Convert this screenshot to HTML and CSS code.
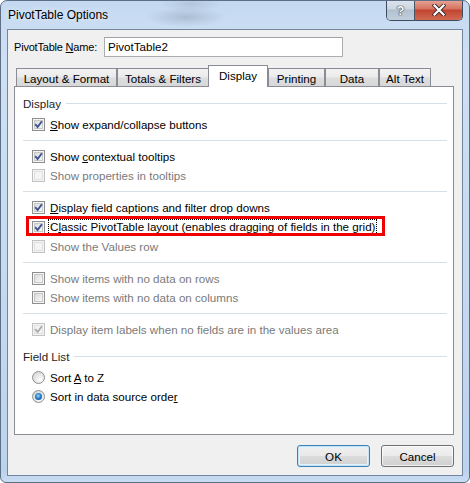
FILE: index.html
```html
<!DOCTYPE html>
<html lang="en">
<head>
  <meta charset="UTF-8">
  <title>PivotTable Options</title>
  <link rel="stylesheet" href="styles.css">
</head>
<body>
  <div class="window">
    <!-- Aero title bar -->
    <div class="titlebar">
      <span class="title">PivotTable Options</span>
      <div class="caption-btns">
        <span class="cbtn help">?</span>
        <span class="cbtn close">
          <svg width="14" height="12" viewBox="0 0 14 12">
            <path d="M2.5 1.5 L11.5 10.5 M11.5 1.5 L2.5 10.5" stroke="#3b2a2a" stroke-width="4" stroke-linecap="square"/>
            <path d="M2.5 1.5 L11.5 10.5 M11.5 1.5 L2.5 10.5" stroke="#fff" stroke-width="2.2" stroke-linecap="square"/>
          </svg>
        </span>
      </div>
    </div>

    <div class="client">
      <div class="name-row">
        <span class="name-label">PivotTable <u>N</u>ame:</span>
        <div class="textbox">PivotTable2</div>
      </div>

      <div class="tabs">
        <span class="tab w-layout">Layout &amp; Format</span>
        <span class="tab w-totals">Totals &amp; Filters</span>
        <span class="tab active w-display">Display</span>
        <span class="tab w-printing">Printing</span>
        <span class="tab w-data">Data</span>
        <span class="tab w-alt">Alt Text</span>
      </div>

      <div class="panel">
        <div class="group-head"><span>Display</span><span class="head-line"></span></div>

        <div class="row first">
          <span class="check on"><svg viewBox="0 0 11 11"><path d="M2.2 5.2 L4.6 8 L8.9 2.2"/></svg></span>
          <span class="label"><u>S</u>how expand/collapse buttons</span>
        </div>
        <div class="sep"></div>

        <div class="row">
          <span class="check on"><svg viewBox="0 0 11 11"><path d="M2.2 5.2 L4.6 8 L8.9 2.2"/></svg></span>
          <span class="label">Show <u>c</u>ontextual tooltips</span>
        </div>
        <div class="row">
          <span class="check disabled"></span>
          <span class="label dim">Show properties in tooltips</span>
        </div>
        <div class="sep"></div>

        <div class="row">
          <span class="check on"><svg viewBox="0 0 11 11"><path d="M2.2 5.2 L4.6 8 L8.9 2.2"/></svg></span>
          <span class="label"><u>D</u>isplay field captions and filter drop downs</span>
        </div>
        <div class="row marked">
          <span class="check on"><svg viewBox="0 0 11 11"><path d="M2.2 5.2 L4.6 8 L8.9 2.2"/></svg></span>
          <span class="label focus">C<u>l</u>assic PivotTable layout (enables dragging of fields in the grid)</span>
        </div>
        <div class="row">
          <span class="check disabled"></span>
          <span class="label dim">Show the Values row</span>
        </div>
        <div class="sep"></div>

        <div class="row">
          <span class="check"></span>
          <span class="label dim">Show items with no data on rows</span>
        </div>
        <div class="row">
          <span class="check"></span>
          <span class="label dim">Show items with no data on columns</span>
        </div>
        <div class="sep"></div>

        <div class="row">
          <span class="check disabled on"><svg viewBox="0 0 11 11"><path d="M2.2 5.2 L4.6 8 L8.9 2.2"/></svg></span>
          <span class="label dim">Display item labels when no fields are in the values area</span>
        </div>

        <div class="group-head second"><span>Field List</span><span class="head-line"></span></div>
        <div class="row first">
          <span class="radio"></span>
          <span class="label">Sort <u>A</u> to Z</span>
        </div>
        <div class="row">
          <span class="radio on"></span>
          <span class="label">Sort in data source orde<u>r</u></span>
        </div>
      </div>

      <div class="buttons">
        <span class="btn default">OK</span>
        <span class="btn">Cancel</span>
      </div>
    </div>
  </div>
</body>
</html>
```

FILE: styles.css
```css
/* Windows 7 style dialog */
body {
  margin: 0;
  font-family: 'Liberation Sans', Arial, sans-serif;
  font-size: 11.6px;
  color: #000;
  background: #fff;
}

.window {
  width: 470px;
  height: 483px;
  box-sizing: border-box;
  display: flex;
  flex-direction: column;
  border: 1px solid #5d6f85;
  border-radius: 7px 7px 6px 6px;
  overflow: hidden;
  background:
    radial-gradient(ellipse 40px 10px at 185px 16px, rgba(120,135,155,0.35), transparent),
    radial-gradient(ellipse 30px 8px at 190px 3px, rgba(120,135,155,0.25), transparent),
    linear-gradient(to bottom, #c4d9f1, #cfe0f4 60px, #bcd3ee 470px, #c9dcf2);
}

/* Title bar */
.titlebar {
  height: 28px;
  display: flex;
  align-items: flex-start;
}
.title {
  margin: 6px 0 0 7px;
  font-size: 12px;
  line-height: 16px;
  color: #000;
  text-shadow: 0 0 6px rgba(255,255,255,0.9);
}
.caption-btns {
  margin-left: auto;
  margin-right: 6px;
  margin-top: -1px;
  display: flex;
  height: 20px;
  border: 1px solid #3d4c60;
  border-top: none;
  border-radius: 0 0 5px 5px;
  overflow: hidden;
}
.cbtn {
  display: flex;
  align-items: center;
  justify-content: center;
  height: 20px;
}
.help {
  width: 27px;
  border-right: 1px solid #4a5568;
  background: linear-gradient(to bottom, #dde5ee, #cbd6e2 45%, #b1bfcf 50%, #c2d0dd);
  color: #fff;
  font-weight: bold;
  font-size: 13px;
  text-shadow: 0 0 1px #2b3440, 0 0 1px #2b3440, 0 0 1px #2b3440;
}
.close {
  width: 47px;
  background: linear-gradient(to bottom, #e8a698, #d5735f 45%, #c24431 50%, #d06a52);
}

/* Client area */
.client {
  flex: 1;
  margin: 0 6px 6px 6px;
  border: 1px solid #74869c;
  background: #f0f0f0;
  padding: 7px 8px 0 6px;
  display: flex;
  flex-direction: column;
}

.name-row {
  height: 20px;
  display: flex;
  align-items: center;
}
.name-label {
  width: 90px;
  flex: none;
  white-space: nowrap;
  font-size: 11px;
  letter-spacing: -0.2px;
}
.textbox {
  width: 239px;
  height: 20px;
  box-sizing: border-box;
  border: 1px solid #abadb3;
  border-top-color: #9ea3ab;
  background: #fff;
  padding-left: 3px;
  line-height: 18px;
}

/* Tabs */
.tabs {
  margin-top: 8px;
  height: 21px;
  display: flex;
  align-items: flex-end;
  padding-left: 2px;
}
.tab {
  box-sizing: border-box;
  height: 18px;
  border: 1px solid #898c95;
  border-bottom: none;
  background: linear-gradient(to bottom, #f3f3f3, #ebebeb 45%, #dddddd 55%, #d8d8d8);
  display: flex;
  align-items: center;
  justify-content: center;
  padding-top: 1px;
}
.tab.active {
  height: 22px;
  margin-bottom: -1px;
  margin-left: -1px;
  background: #fff;
  position: relative;
  z-index: 1;
  padding-bottom: 3px;
}
.w-layout   { width: 101px; }
.w-totals   { width: 92px; }
.w-display  { width: 60px; }
.w-printing { width: 57px; }
.w-data     { width: 54px; }
.w-alt      { width: 52px; }

/* Tab page */
.panel {
  height: 349px;
  box-sizing: border-box;
  border: 1px solid #898c95;
  background: #fff;
  padding: 7px 6px 0 8px;
  display: flex;
  flex-direction: column;
}
.group-head {
  height: 19px;
  display: flex;
  align-items: center;
  color: #1e1e1e;
}
.group-head.second { margin-top: 8px; }
.head-line {
  flex: 1;
  height: 1px;
  margin-left: 5px;
  background: #d5dfe5;
}
.sep {
  height: 1px;
  margin: 6px 0;
  background: #d5dfe5;
}
.row {
  height: 19px;
  display: flex;
  align-items: center;
  padding-left: 9px;
  gap: 5px;
}
.row.first { margin-top: 2px; }
.row.marked {
  height: 20px;
  position: relative;
}
/* red annotation box */
.row.marked::after {
  content: '';
  position: absolute;
  left: 3px;
  top: -1px;
  width: 359px;
  height: 20px;
  box-sizing: border-box;
  border: 3px solid #f00000;
}
.label { white-space: nowrap; }
.label.dim { color: #7a7a7a; }
.label.focus {
  outline: 1px dotted #000;
  outline-offset: 0;
  padding: 0 1px;
  margin-left: -1px;
  line-height: 14px;
}

/* Checkboxes */
.check {
  width: 13px;
  height: 13px;
  box-sizing: border-box;
  flex: none;
  border: 1px solid #8e8f8f;
  background: #f4f4f4;
  box-shadow: inset 0 0 0 1px #f4f4f4, inset 0 0 0 2px #c8c8c8;
  background-image: linear-gradient(135deg, #d3d3d3, #f7f7f7 80%);
  display: flex;
  align-items: center;
  justify-content: center;
}
.check svg {
  width: 11px;
  height: 11px;
}
.check svg path {
  fill: none;
  stroke: #3d5391;
  stroke-width: 1.9;
}
.check.disabled {
  border-color: #c2c2c2;
  background: #f4f4f4;
  box-shadow: inset 0 0 0 1px #f4f4f4, inset 0 0 0 2px #e1e1e1;
}
.check.disabled svg path { stroke: #acacac; }

/* Radios */
.radio {
  width: 13px;
  height: 13px;
  box-sizing: border-box;
  flex: none;
  border: 1px solid #8e8f8f;
  border-radius: 50%;
  background: radial-gradient(circle at 65% 70%, #fdfdfd, #d8d8d8 80%);
  display: flex;
  align-items: center;
  justify-content: center;
}
.radio.on::after {
  content: '';
  width: 7px;
  height: 7px;
  border-radius: 50%;
  background: radial-gradient(circle at 45% 40%, #8fd8fb, #1a71c0 55%, #0d4b8c);
}

/* Dialog buttons */
.buttons {
  margin-top: 10px;
  display: flex;
  justify-content: flex-end;
  gap: 11px;
}
.btn {
  width: 73px;
  height: 22px;
  box-sizing: border-box;
  border: 1px solid #707070;
  border-radius: 3px;
  background: linear-gradient(to bottom, #f2f2f2, #ebebeb 50%, #dddddd 50%, #cfcfcf);
  box-shadow: inset 0 0 0 1px rgba(255,255,255,0.7);
  display: flex;
  align-items: center;
  justify-content: center;
}
.btn.default {
  border-color: #3c7fb1;
  box-shadow: inset 0 0 0 1px #c0e4f8, inset 0 0 0 2px #e2f1fb;
  background: linear-gradient(to bottom, #f0f0f0, #e9e9e9 50%, #dcdcdc 50%, #d0d0d0);
}
```
